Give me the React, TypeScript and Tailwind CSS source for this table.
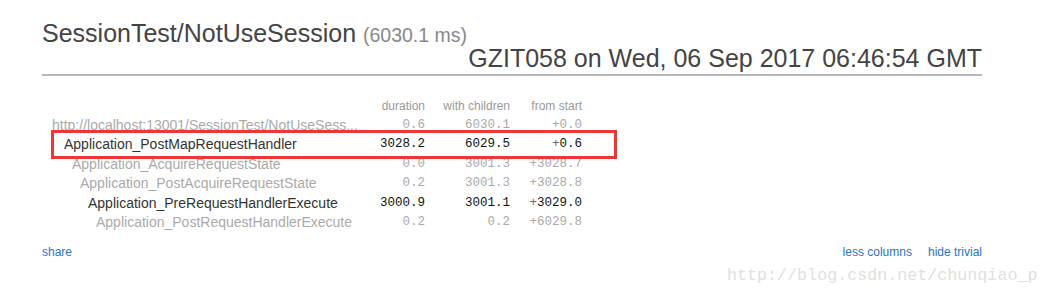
import React from 'react';

type Timing = {
  name: string;
  indent: string;
  duration: string;
  withChildren: string;
  fromStart: string;
  trivial: boolean;
};

const timings: Timing[] = [
  { name: 'http://localhost:13001/SessionTest/NotUseSess...', indent: 'pl-0', duration: '0.6', withChildren: '6030.1', fromStart: '0.0', trivial: true },
  { name: 'Application_PostMapRequestHandler', indent: 'pl-[12px]', duration: '3028.2', withChildren: '6029.5', fromStart: '0.6', trivial: false },
  { name: 'Application_AcquireRequestState', indent: 'pl-[20px]', duration: '0.0', withChildren: '3001.3', fromStart: '3028.7', trivial: true },
  { name: 'Application_PostAcquireRequestState', indent: 'pl-[28px]', duration: '0.2', withChildren: '3001.3', fromStart: '3028.8', trivial: true },
  { name: 'Application_PreRequestHandlerExecute', indent: 'pl-[36px]', duration: '3000.9', withChildren: '3001.1', fromStart: '3029.0', trivial: false },
  { name: 'Application_PostRequestHandlerExecute', indent: 'pl-[44px]', duration: '0.2', withChildren: '0.2', fromStart: '6029.8', trivial: true },
];

export default function App() {
  return (
    <div className="relative w-[1049px] h-[296px] overflow-hidden bg-white font-['Liberation_Sans',Arial,sans-serif]">
      <div className="ml-[42px] w-[940px]">
        <div className="pt-[22px] pb-[4px] border-b-2 border-[#b8b8b8]">
          <div className="text-[25px] leading-[23px] text-[#444] whitespace-nowrap">
            SessionTest/NotUseSession{' '}
            <span className="text-[19.5px] text-[#888]">(6030.1 ms)</span>
          </div>
          <div className="text-right text-[25px] leading-[23px] text-[#444] whitespace-nowrap">
            GZIT058 on Wed, 06 Sep 2017 06:46:54 GMT
          </div>
        </div>

        <div className="mt-[21px] ml-[10px] grid grid-cols-[313px_60px_85px_72px] text-[14px]">
          <div className="h-[19px]" />
          <div className="h-[19px] leading-[19px] text-right text-[12px] text-[#999]">duration</div>
          <div className="h-[19px] leading-[19px] text-right text-[12px] text-[#999]">with children</div>
          <div className="h-[19px] leading-[19px] text-right text-[12px] text-[#999]">from start</div>
          {timings.map((t) => {
            const text = t.trivial ? 'text-[#aaa]' : 'text-[#333]';
            const num = t.trivial ? 'text-[#aaa]' : 'text-[#111]';
            return (
              <React.Fragment key={t.name}>
                <div className={`h-[19.4px] leading-[19.4px] whitespace-nowrap ${t.indent} ${text}`}>{t.name}</div>
                <div className={`h-[19.4px] leading-[19.4px] text-right font-['Liberation_Mono',monospace] text-[12.5px] ${num}`}>{t.duration}</div>
                <div className={`h-[19.4px] leading-[19.4px] text-right font-['Liberation_Mono',monospace] text-[12.5px] ${num}`}>{t.withChildren}</div>
                <div className={`h-[19.4px] leading-[19.4px] text-right font-['Liberation_Mono',monospace] text-[12.5px] ${num}`}>
                  <span className={t.trivial ? 'text-[#aaa]' : 'text-[#666]'}>+</span>
                  {t.fromStart}
                </div>
              </React.Fragment>
            );
          })}
        </div>

        <div className="mt-[11px] flex justify-between text-[12px] leading-[19px] text-[#1f74cf]">
          <span>share</span>
          <div className="flex gap-[16px]">
            <span>less columns</span>
            <span>hide trivial</span>
          </div>
        </div>
      </div>

      {/* highlight annotation */}
      <div className="absolute left-[51px] top-[130px] w-[566px] h-[29px] border-[3px] border-[#ee3636]" />

      {/* watermark */}
      <div className="absolute left-[727px] top-[265px] font-['Liberation_Mono',monospace] text-[16.7px] leading-[22px] text-[#e0e0e0] whitespace-nowrap">
        http://blog.csdn.net/chunqiao_p
      </div>
    </div>
  );
}
